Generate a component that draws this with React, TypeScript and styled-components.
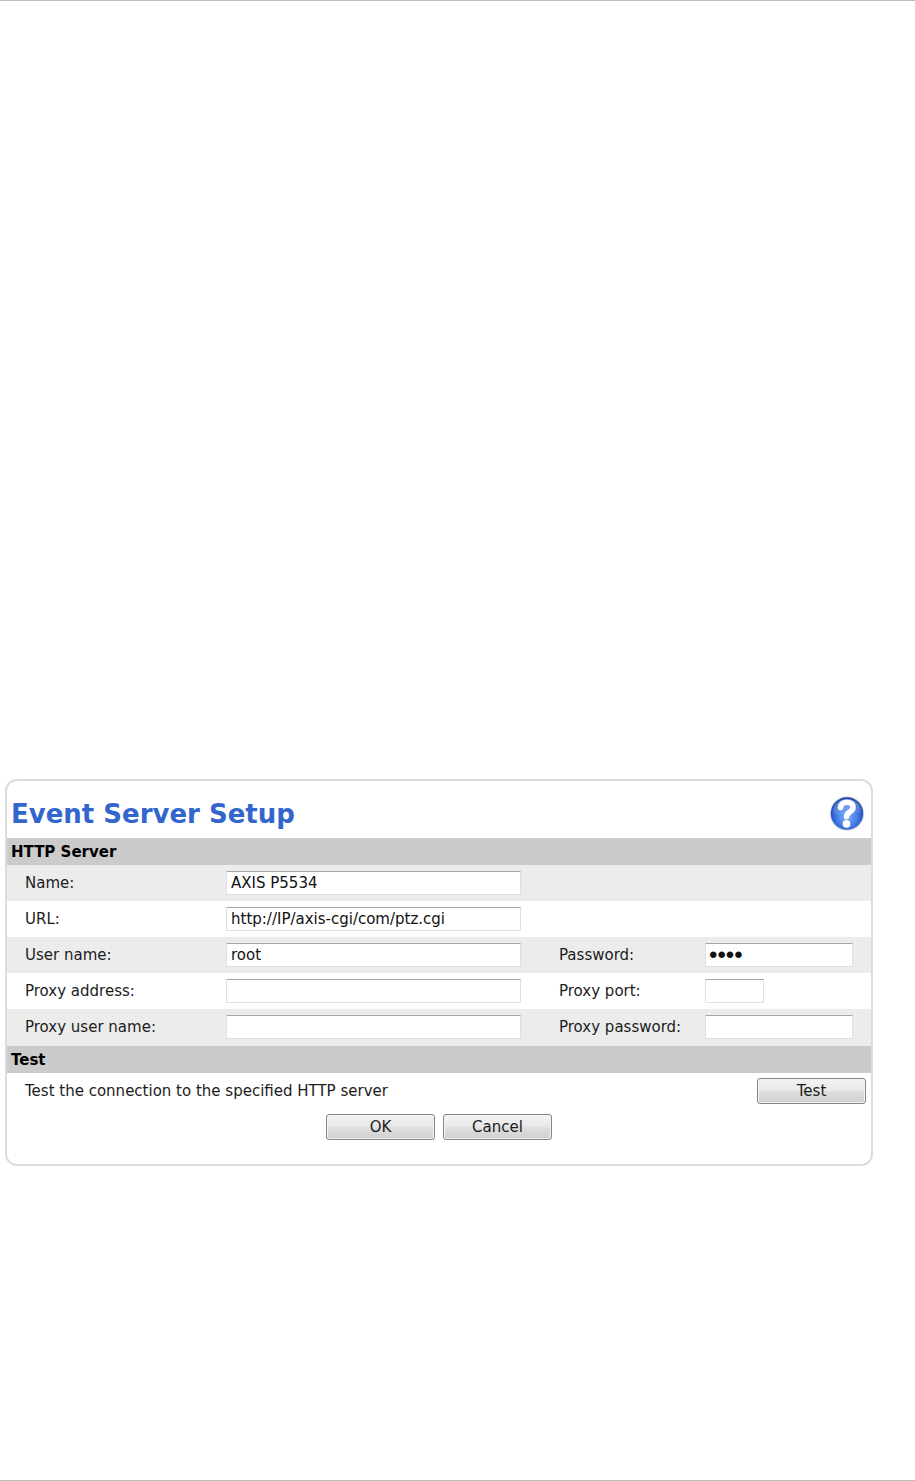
import React from 'react';
import styled, { createGlobalStyle } from 'styled-components';

const GlobalStyle = createGlobalStyle`
  *, *::before, *::after { box-sizing: border-box; }
  body {
    margin: 0;
    background: #fff;
    color: #1c1c1c;
    font: 15px/20px "DejaVu Sans", Verdana, sans-serif;
  }
`;

const Page = styled.main`
  display: flex;
  flex-direction: column;
  min-height: 100vh;
  padding: 778px 42px 24px 5px;
  border-top: 1px solid #bdbdbd;
  border-bottom: 1px solid #bdbdbd;
`;

const Panel = styled.form`
  display: flex;
  flex-direction: column;
  padding-bottom: 20px;
  border: 2px solid #dcdcdc;
  border-radius: 12px;
`;

const TitleBar = styled.header`
  display: flex;
  align-items: center;
  justify-content: space-between;
  height: 57px;
  padding: 8px 6px 0 4px;
`;

const Title = styled.h1`
  margin: 0;
  color: #3366cc;
  font-size: 26px;
  line-height: 32px;
  font-weight: bold;
`;

const HelpLink = styled.a`
  display: block;
  width: 36px;
  height: 36px;
`;

const SectionHeading = styled.h2`
  height: 27px;
  margin: 0;
  padding: 0 4px;
  background: #cbcbcb;
  color: #000;
  font-size: 15px;
  line-height: 28px;
  font-weight: bold;
`;

const Fields = styled.div`
  border-bottom: 1px solid #ececec;
`;

const FieldRow = styled.div`
  display: grid;
  grid-template-columns: 201fr 333fr 146fr 166fr;
  align-items: center;
  height: 36px;
  padding-left: 18px;

  &:nth-child(odd) { background: #ececec; }
`;

const TextField = styled.input<{ $width: number }>`
  width: ${({ $width }) => $width}px;
  max-width: 100%;
  height: 24px;
  padding: 0 4px;
  border: 1px solid #dfdfe2;
  border-top-color: #a6a6ab;
  border-radius: 1px;
  outline: none;
  background: #fff;
  color: #111;
  font: inherit;

  &[type='password'] {
    padding: 0 3px;
    font: 24px/22px "Liberation Sans", Arial, sans-serif;
  }
`;

const TestRow = styled.div`
  display: flex;
  align-items: center;
  justify-content: space-between;
  height: 36px;
  padding: 0 5px 0 18px;
`;

const Actions = styled.div`
  display: flex;
  align-items: center;
  justify-content: center;
  gap: 8px;
  height: 35px;
`;

const Button = styled.button`
  width: 109px;
  height: 26px;
  padding: 0;
  border: 1px solid #858585;
  border-radius: 3px;
  background: linear-gradient(#f3f3f3 0%, #e9e9e9 45%, #dedede 55%, #d0d0d0 100%);
  box-shadow: inset 0 0 0 1px #f4f4f4;
  color: #1c1c1c;
  font: inherit;
`;

function HelpIcon() {
  return (
    <svg width="36" height="36" viewBox="0 0 36 36" aria-hidden="true">
      <defs>
        <radialGradient id="ball" cx="50%" cy="60%" r="58%">
          <stop offset="0" stopColor="#7fb0f8" />
          <stop offset="0.5" stopColor="#4a82e6" />
          <stop offset="0.82" stopColor="#2759c8" />
          <stop offset="1" stopColor="#1b439f" />
        </radialGradient>
        <linearGradient id="shine" x1="0" y1="0" x2="0" y2="1">
          <stop offset="0" stopColor="#fff" stopOpacity="0.35" />
          <stop offset="1" stopColor="#fff" stopOpacity="0.08" />
        </linearGradient>
      </defs>
      <circle cx="18" cy="17.5" r="17.2" fill="#d5dbe6" />
      <circle cx="18" cy="17.5" r="16.2" fill="url(#ball)" />
      <path d="M4 18C3 9 10 3 18 3s15 6 14 14c-8-3-18 3-28 1Z" fill="url(#shine)" />
      <path
        d="M11.5 11.500C12 4.500 24 4.500 24 11.200c0 4.800-6.200 4.800-6.400 9.300"
        fill="none"
        stroke="#fff"
        strokeWidth="5.6"
        strokeLinecap="round"
      />
      <circle cx="17.500" cy="27.800" r="3.900" fill="#fff" />
    </svg>
  );
}

type Field = { id: string; label: string; width: number; value?: string; type?: string };

const rows: Field[][] = [
  [{ id: 'name', label: 'Name:', width: 295, value: 'AXIS P5534' }],
  [{ id: 'url', label: 'URL:', width: 295, value: 'http://IP/axis-cgi/com/ptz.cgi' }],
  [
    { id: 'user', label: 'User name:', width: 295, value: 'root' },
    { id: 'password', label: 'Password:', width: 148, value: 'root', type: 'password' },
  ],
  [
    { id: 'proxy-address', label: 'Proxy address:', width: 295 },
    { id: 'proxy-port', label: 'Proxy port:', width: 59 },
  ],
  [
    { id: 'proxy-user', label: 'Proxy user name:', width: 295 },
    { id: 'proxy-password', label: 'Proxy password:', width: 148, type: 'password' },
  ],
];

export default function App() {
  return (
    <>
      <GlobalStyle />
      <Page>
        <Panel onSubmit={(e) => e.preventDefault()}>
          <TitleBar>
            <Title>Event Server Setup</Title>
            <HelpLink href="#help" aria-label="Help">
              <HelpIcon />
            </HelpLink>
          </TitleBar>
          <SectionHeading>HTTP Server</SectionHeading>
          <Fields>
            {rows.map((fields) => (
              <FieldRow key={fields[0].id}>
                {fields.map((f) => (
                  <React.Fragment key={f.id}>
                    <label htmlFor={f.id}>{f.label}</label>
                    <TextField
                      id={f.id}
                      type={f.type ?? 'text'}
                      defaultValue={f.value}
                      $width={f.width}
                      autoComplete="off"
                    />
                  </React.Fragment>
                ))}
              </FieldRow>
            ))}
          </Fields>
          <SectionHeading>Test</SectionHeading>
          <TestRow>
            <span>Test the connection to the specified HTTP server</span>
            <Button type="button">Test</Button>
          </TestRow>
          <Actions>
            <Button type="submit">OK</Button>
            <Button type="button">Cancel</Button>
          </Actions>
        </Panel>
      </Page>
    </>
  );
}
